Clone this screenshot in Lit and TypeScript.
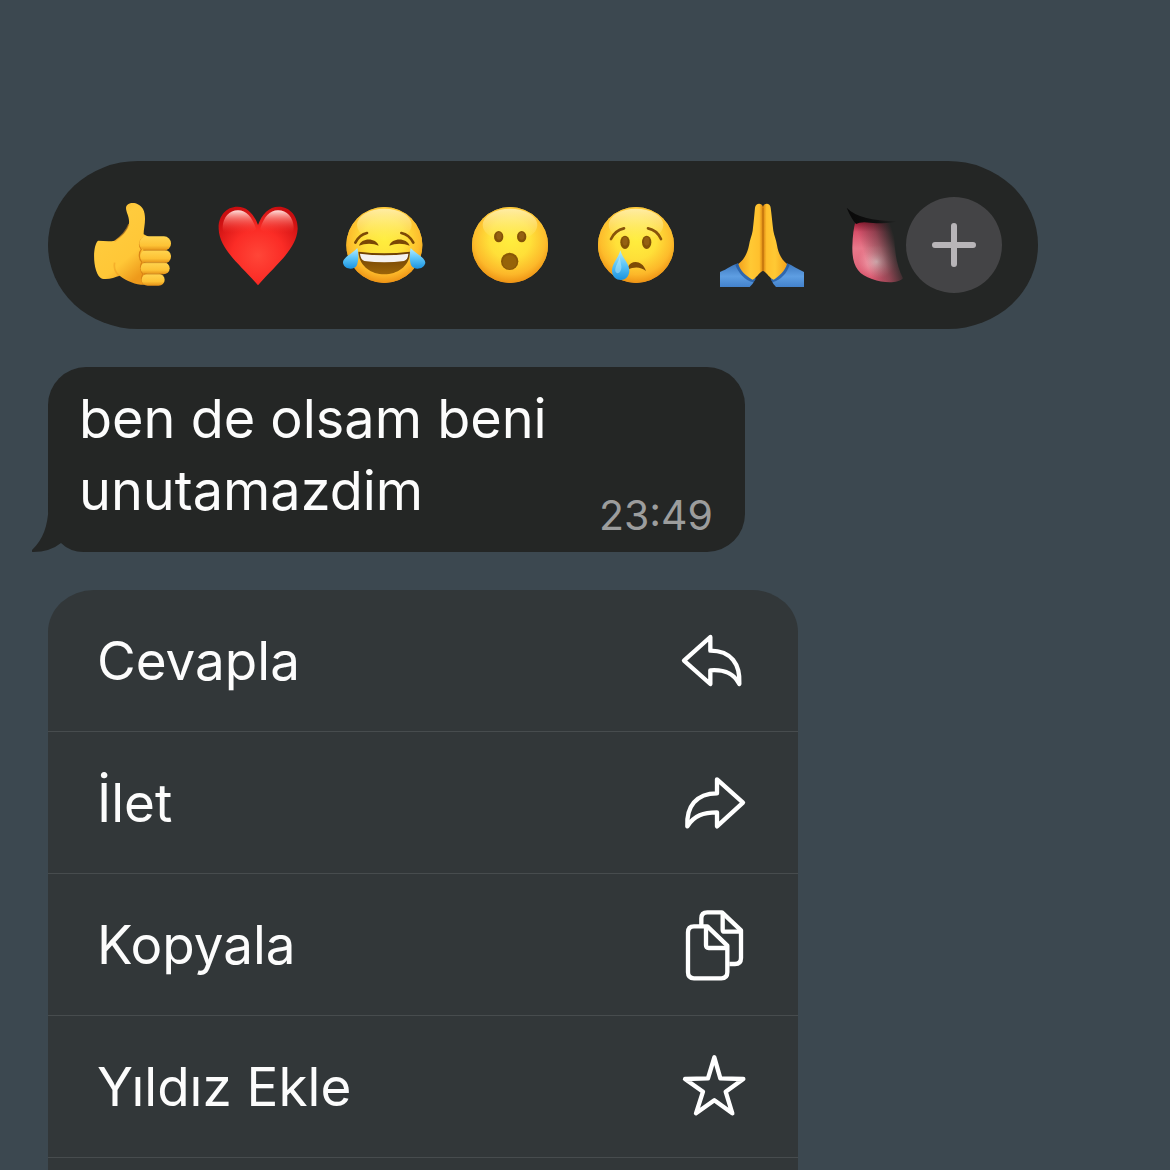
import { LitElement, html, css, svg } from "lit";
import { customElement, property } from "lit/decorators.js";

/* Face gradients shared by the round emoji; each svg gets its own ids. */
const faceDefs = (id: string) => svg`
  <linearGradient id="${id}-base" x1="0" y1="0" x2="0" y2="1">
    <stop offset="0" stop-color="#ffd95a"></stop>
    <stop offset="0.5" stop-color="#ffd62e"></stop>
    <stop offset="1" stop-color="#f6a11c"></stop>
  </linearGradient>
  <radialGradient id="${id}-glow" cx="0.5" cy="0.42" r="0.6">
    <stop offset="0" stop-color="#ffee3e"></stop>
    <stop offset="0.45" stop-color="#ffe23a" stop-opacity="0.9"></stop>
    <stop offset="0.78" stop-color="#fdb92b" stop-opacity="0.85"></stop>
    <stop offset="1" stop-color="#ea8a10"></stop>
  </radialGradient>
  <linearGradient id="${id}-shine" x1="0" y1="0" x2="0" y2="1">
    <stop offset="0" stop-color="#fff3b8" stop-opacity="0.85"></stop>
    <stop offset="1" stop-color="#fff08a" stop-opacity="0"></stop>
  </linearGradient>
  <linearGradient id="${id}-tear" x1="0" y1="0" x2="0" y2="1">
    <stop offset="0" stop-color="#b5ecff"></stop>
    <stop offset="0.5" stop-color="#5cc4f7"></stop>
    <stop offset="1" stop-color="#1b93e0"></stop>
  </linearGradient>`;

const face = (id: string, cx: number) => svg`
  <circle cx="${cx}" cy="165" r="114" fill="url(#${id}-base)"></circle>
  <circle cx="${cx}" cy="165" r="114" fill="url(#${id}-glow)"></circle>
  <ellipse cx="${cx}" cy="105" rx="82" ry="49" fill="url(#${id}-shine)"></ellipse>`;

const emoji = {
  thumb: html`<svg viewBox="30 39 252 252" aria-hidden="true">
    <defs>
      <linearGradient id="th-a" x1="0" y1="0" x2="0.6" y2="1">
        <stop offset="0" stop-color="#f5a623"></stop>
        <stop offset="0.35" stop-color="#ffcb3d"></stop>
        <stop offset="0.75" stop-color="#ffc737"></stop>
        <stop offset="1" stop-color="#ee9a1b"></stop>
      </linearGradient>
      <linearGradient id="th-b" x1="0" y1="0" x2="0" y2="1">
        <stop offset="0" stop-color="#ffd550"></stop>
        <stop offset="0.65" stop-color="#fdc235"></stop>
        <stop offset="1" stop-color="#e38f17"></stop>
      </linearGradient>
    </defs>
    <path fill="url(#th-a)" d="M54 152 C70 153 90 155 104 152 C124 141 144 121 147 100 C149 81 138 67 138 54 C139 36 173 32 189 57 C202 82 190 116 191 133 L214 145 L200 284 C174 287 142 275 119 257 C104 262 85 270 66 266 C39 255 35 170 54 152Z"></path>
    <path fill="none" stroke="#ec9d20" stroke-opacity="0.55" stroke-width="5" d="M104 154 C118 144 137 130 147 103 M117 257 C105 246 101 232 104 218"></path>
    <path fill="none" stroke="#d98416" stroke-width="4" stroke-linejoin="round" d="M193 143 C179 148 174 166 184 178 C175 188 177 209 186 217 C179 226 181 243 189 252 C183 261 184 272 191 282"></path>
    <rect x="178" y="139" width="95" height="43" rx="21" fill="url(#th-b)"></rect>
    <rect x="181" y="180" width="92" height="39" rx="19" fill="url(#th-b)"></rect>
    <rect x="182" y="217" width="87" height="36" rx="18" fill="url(#th-b)"></rect>
    <rect x="185" y="251" width="69" height="36" rx="18" fill="url(#th-b)"></rect>
    <path fill="none" stroke="#b8690f" stroke-opacity="0.6" stroke-width="3" d="M190 181 H260 M190 218 H258 M192 252 H248"></path>
  </svg>`,
  heart: html`<svg viewBox="33 39 252 252" aria-hidden="true">
    <defs>
      <radialGradient id="ht-a" cx="0.5" cy="0.62" r="0.66">
        <stop offset="0" stop-color="#ff4638"></stop>
        <stop offset="0.5" stop-color="#fb2c26"></stop>
        <stop offset="1" stop-color="#c90e10"></stop>
      </radialGradient>
      <linearGradient id="ht-b" x1="0" y1="0" x2="0" y2="1">
        <stop offset="0" stop-color="#ffe0dc"></stop>
        <stop offset="0.3" stop-color="#ff8d85" stop-opacity="0.7"></stop>
        <stop offset="0.8" stop-color="#ff3a30" stop-opacity="0"></stop>
      </linearGradient>
    </defs>
    <path fill="url(#ht-a)" d="M159 105 C147 72 126 50 98 50 C62 50 39 80 41 117 C44 179 104 222 159 286 C214 222 274 179 278 117 C279 80 256 50 221 50 C192 50 171 72 159 105Z"></path>
    <path fill="url(#ht-b)" d="M153 116 C141 80 124 61 99 61 C73 61 54 82 53 112 C53 136 72 150 98 144 C120 139 144 128 153 116Z"></path>
    <path fill="url(#ht-b)" d="M166 116 C177 80 194 61 219 61 C246 61 265 82 266 112 C266 136 246 150 221 144 C198 139 175 128 166 116Z"></path>
  </svg>`,
  joy: html`<svg viewBox="36 39 252 252" aria-hidden="true">
    <defs>
      ${faceDefs("joy")}
      <linearGradient id="joy-m" x1="0" y1="0" x2="0" y2="1">
        <stop offset="0" stop-color="#6b3d02"></stop>
        <stop offset="1" stop-color="#9c6508"></stop>
      </linearGradient>
    </defs>
    ${face("joy", 163)}
    <g fill="none" stroke="#7d4a06" stroke-width="8" stroke-linecap="round">
      <path d="M76 158 Q88 134 111 129"></path>
      <path d="M250 158 Q238 134 214 129"></path>
    </g>
    <path fill="#7a4705" d="M87 167 C93 142 139 142 146 167 C130 159 105 159 87 167Z"></path>
    <path fill="#7a4705" d="M178 167 C185 142 231 142 239 167 C221 159 196 159 178 167Z"></path>
    <path fill="url(#joy-m)" d="M85 185 Q162 195 240 185 C240 226 205 253 163 253 C121 253 87 226 85 185Z"></path>
    <path fill="#f4f1ef" d="M90 191 Q162 201 235 191 Q234 209 222 213 Q163 221 103 213 Q91 208 90 191Z"></path>
    <path fill="url(#joy-tear)" d="M82 174 C86 190 86 212 81 225 C73 242 43 239 39 219 C38 202 66 192 82 174Z"></path>
    <path fill="url(#joy-tear)" d="M242 174 C258 192 286 202 286 219 C281 239 252 242 243 225 C238 212 238 190 242 174Z"></path>
  </svg>`,
  wow: html`<svg viewBox="39 39 252 252" aria-hidden="true">
    <defs>${faceDefs("wow")}</defs>
    ${face("wow", 165)}
    <ellipse cx="131" cy="140" rx="14" ry="17" fill="#835207"></ellipse>
    <ellipse cx="200" cy="140" rx="14" ry="17" fill="#835207"></ellipse>
    <ellipse cx="132" cy="138" rx="8" ry="11" fill="#946012"></ellipse>
    <ellipse cx="200" cy="138" rx="8" ry="11" fill="#946012"></ellipse>
    <circle cx="164" cy="214" r="26" fill="#8a5806"></circle>
    <circle cx="164" cy="216" r="21" fill="#966309"></circle>
  </svg>`,
  cry: html`<svg viewBox="42 39 252 252" aria-hidden="true">
    <defs>${faceDefs("cry")}</defs>
    ${face("cry", 168)}
    <g fill="none" stroke="#88530a" stroke-width="8" stroke-linecap="round">
      <path d="M93 147 Q105 121 132 115"></path>
      <path d="M204 115 Q231 120 243 147"></path>
    </g>
    <ellipse cx="135" cy="157" rx="14" ry="20" fill="#835207"></ellipse>
    <ellipse cx="200" cy="157" rx="14" ry="20" fill="#835207"></ellipse>
    <ellipse cx="135" cy="154" rx="8" ry="13" fill="#946012"></ellipse>
    <ellipse cx="200" cy="154" rx="8" ry="13" fill="#946012"></ellipse>
    <path fill="#7d4a06" d="M144 231 C153 210 187 209 198 243 C182 230 164 229 142 239Z"></path>
    <path fill="url(#cry-tear)" d="M121 181 C127 204 148 220 148 242 C147 279 97 279 96 242 C96 220 115 204 121 181Z"></path>
    <path fill="#d5f4ff" fill-opacity="0.4" d="M119 201 C116 216 104 229 106 244 C112 257 126 246 124 228Z"></path>
  </svg>`,
  pray: html`<svg viewBox="45 39 252 252" aria-hidden="true">
    <defs>
      <linearGradient id="pr-s" x1="0" y1="0" x2="0" y2="1">
        <stop offset="0" stop-color="#3c76bd"></stop>
        <stop offset="0.55" stop-color="#5e9ee2"></stop>
        <stop offset="1" stop-color="#4382cc"></stop>
      </linearGradient>
      <linearGradient id="pr-l" x1="0" y1="0" x2="1" y2="0">
        <stop offset="0" stop-color="#f3a21d"></stop>
        <stop offset="0.5" stop-color="#ffc934"></stop>
        <stop offset="0.85" stop-color="#ffc02d"></stop>
        <stop offset="1" stop-color="#d98210"></stop>
      </linearGradient>
      <linearGradient id="pr-r" x1="1" y1="0" x2="0" y2="0">
        <stop offset="0" stop-color="#f3a21d"></stop>
        <stop offset="0.5" stop-color="#ffc934"></stop>
        <stop offset="0.85" stop-color="#ffc02d"></stop>
        <stop offset="1" stop-color="#d98210"></stop>
      </linearGradient>
    </defs>
    <path fill="url(#pr-s)" d="M45 246 C66 238 84 224 99 220 C110 240 130 260 152 266 Q143 283 134 291 H45Z"></path>
    <path fill="url(#pr-s)" d="M297 246 C279 239 262 226 246 220 C236 240 220 259 197 266 Q204 282 213 291 H297Z"></path>
    <path fill="#20549b" fill-opacity="0.7" d="M99 220 C110 240 130 260 152 266 L146 277 C118 271 100 248 91 224Z"></path>
    <path fill="#20549b" fill-opacity="0.7" d="M246 220 C236 240 220 259 197 266 L202 277 C228 270 246 249 254 224Z"></path>
    <path fill="url(#pr-l)" d="M150 53 C152 38 171 38 174 51 V242 C160 250 154 264 143 269 C122 258 106 242 100 222 C118 208 127 190 132 166 C134 150 141 136 143 122 C146 98 148 74 150 53Z"></path>
    <path fill="url(#pr-r)" d="M197 53 C196 38 176 38 174 51 V242 C188 250 193 264 206 269 C224 258 240 242 246 222 C229 208 220 190 216 166 C214 150 207 136 205 122 C202 98 200 74 197 53Z"></path>
    <path fill="none" stroke="#b86c0b" stroke-width="3" d="M174 53 V243"></path>
  </svg>`,
  tongue: html`<svg viewBox="48 159 252 252" aria-hidden="true">
    <defs>
      <linearGradient id="tg-a" x1="0" y1="0" x2="0" y2="1">
        <stop offset="0" stop-color="#8f1029"></stop>
        <stop offset="0.18" stop-color="#d8506a"></stop>
        <stop offset="0.45" stop-color="#e8798b"></stop>
        <stop offset="1" stop-color="#d9566e"></stop>
      </linearGradient>
      <radialGradient id="tg-b" cx="0.5" cy="0.5" r="0.5">
        <stop offset="0" stop-color="#f9c8cd"></stop>
        <stop offset="1" stop-color="#ee98a5" stop-opacity="0"></stop>
      </radialGradient>
      <linearGradient id="tg-f" gradientUnits="userSpaceOnUse" x1="100" y1="306" x2="198" y2="276">
        <stop offset="0" stop-color="#242625" stop-opacity="0"></stop>
        <stop offset="0.5" stop-color="#242625" stop-opacity="0.4"></stop>
        <stop offset="1" stop-color="#242625"></stop>
      </linearGradient>
      <linearGradient id="tg-c" x1="0" y1="0" x2="1" y2="0">
        <stop offset="0" stop-color="#080808"></stop>
        <stop offset="0.6" stop-color="#101010"></stop>
        <stop offset="1" stop-color="#242625"></stop>
      </linearGradient>
    </defs>
    <path fill="url(#tg-a)" d="M77 212 H195 Q186 320 219 385 C205 400 164 401 126 387 C82 373 66 345 67 290 Q68 242 77 212Z"></path>
    <ellipse cx="140" cy="335" rx="58" ry="50" fill="url(#tg-b)"></ellipse>
    <path fill="url(#tg-f)" d="M60 200 H222 V402 H60Z"></path>
    <path fill="url(#tg-c)" d="M50 173 Q88 213 202 213 Q180 223 120 218 Q92 214 78 222 Q63 205 50 173Z"></path>
  </svg>`,
};

const icons = {
  reply: html`<svg viewBox="54 45 216 216" aria-hidden="true">
    <path d="M151 81 L72 152 L151 222 V181 C192 178 220 188 238 222 C241 163 214 122 151 122Z"></path>
  </svg>`,
  forward: html`<svg viewBox="54 470 216 216" aria-hidden="true">
    <path d="M171 507 L249 577 L171 648 V606 C131 606 102 615 82 648 C79 589 108 549 171 549Z"></path>
  </svg>`,
  copy: html`<svg viewBox="54 56 216 216" aria-hidden="true">
    <path d="M124 105 V84 Q124 66 142 66 H186 L243 120 V203 Q243 221 225 221 H208"></path>
    <path d="M188 69 V118 Q188 124 194 124 H241"></path>
    <path d="M102 108 H142 L202 166 V246 Q202 264 184 264 H102 Q84 264 84 246 V126 Q84 108 102 108Z"></path>
    <path d="M138 110 V165 Q138 173 146 173 H200"></path>
  </svg>`,
  star: html`<svg viewBox="54 482 216 216" aria-hidden="true">
    <path d="M163 501 L181 564 L250 566 L197 604 L217 669 L163 630 L108 669 L129 604 L75 566 L144 564Z"></path>
  </svg>`,
};

@customElement("reaction-bar")
export class ReactionBar extends LitElement {
  static styles = css`
    :host {
      display: flex;
      align-items: center;
      box-sizing: border-box;
      width: 100%;
      max-width: 990px;
      height: 168px;
      padding: 0 36px 0 42px;
      border-radius: 90px / 84px;
      background: #242625;
    }
    .strip {
      display: flex;
      flex: 1;
      min-width: 0;
      gap: 42px;
      overflow: hidden;
    }
    button {
      flex: none;
      margin: 0;
      padding: 0;
      border: 0;
      background: none;
      cursor: pointer;
    }
    .reaction {
      width: 84px;
      height: 84px;
    }
    .reaction svg {
      display: block;
      width: 100%;
      height: 100%;
    }
    .more {
      display: grid;
      place-items: center;
      width: 96px;
      height: 96px;
      border-radius: 50%;
      background: #444446;
    }
    .more svg {
      width: 48px;
      height: 48px;
      fill: none;
      stroke: #b8b5b8;
      stroke-width: 6;
      stroke-linecap: round;
    }
  `;

  private reactions = [
    { label: "Beğen", art: emoji.thumb },
    { label: "Kalp", art: emoji.heart },
    { label: "Gülme", art: emoji.joy },
    { label: "Şaşkın", art: emoji.wow },
    { label: "Üzgün", art: emoji.cry },
    { label: "Teşekkür", art: emoji.pray },
    { label: "Dil", art: emoji.tongue },
  ];

  render() {
    return html`
      <div class="strip">
        ${this.reactions.map(
          (r) => html`<button class="reaction" aria-label=${r.label}>${r.art}</button>`
        )}
      </div>
      <button class="more" aria-label="Daha fazla">
        <svg viewBox="0 0 48 48" aria-hidden="true"><path d="M24 5 V43 M5 24 H43"></path></svg>
      </button>
    `;
  }
}

@customElement("message-bubble")
export class MessageBubble extends LitElement {
  @property() time = "";

  static styles = css`
    :host {
      position: relative;
      display: flex;
      align-items: flex-end;
      box-sizing: border-box;
      width: 100%;
      max-width: 697px;
      padding: 16px 32px 15px 31px;
      border-radius: 38px;
      background: #242625;
      color: #fcfcfc;
    }
    .text {
      flex: 1;
      margin: 0 0 10px;
      font-size: 54px;
      line-height: 72px;
    }
    time {
      color: #9c9d9d;
      font-size: 41px;
      line-height: 44px;
    }
    .tail {
      position: absolute;
      left: -16px;
      bottom: 0;
      width: 60px;
      height: 60px;
      fill: #242625;
    }
    .notch {
      fill: #3c4850;
    }
  `;

  render() {
    return html`
      <svg class="tail" viewBox="0 0 60 60" aria-hidden="true">
        <path class="notch" d="M16 20 V60 H54 Q38 60 29 51Z"></path>
        <path d="M17 0 C17 26 15 44 0 58 Q-1 60 1 60 Q18 60 29 51 Q38 60 52 60 H60 V40 H40 V0Z"></path>
      </svg>
      <p class="text"><slot></slot></p>
      <time>${this.time}</time>
    `;
  }
}

@customElement("context-menu")
export class ContextMenu extends LitElement {
  static styles = css`
    :host {
      display: flex;
      flex: 1;
      flex-direction: column;
      width: 100%;
      max-width: 750px;
      overflow: hidden;
      border-radius: 46px 46px 0 0 / 42px 42px 0 0;
      background: #323739;
    }
    button {
      display: flex;
      align-items: center;
      justify-content: space-between;
      box-sizing: border-box;
      width: 100%;
      height: 142px;
      margin: 0;
      padding: 0 48px 0 49px;
      border: 0;
      border-bottom: 1px solid #474c4e;
      background: none;
      color: #fcfcfc;
      font: inherit;
      font-size: 53px;
      line-height: 72px;
      text-align: left;
      cursor: pointer;
    }
    svg {
      flex: none;
      width: 72px;
      height: 72px;
      fill: none;
      stroke: #fff;
      stroke-width: 13;
      stroke-linecap: butt;
      stroke-linejoin: round;
    }
  `;

  private items = [
    { label: "Cevapla", icon: icons.reply },
    { label: "İlet", icon: icons.forward },
    { label: "Kopyala", icon: icons.copy },
    { label: "Yıldız Ekle", icon: icons.star },
  ];

  render() {
    return this.items.map(
      (item) => html`<button><span>${item.label}</span>${item.icon}</button>`
    );
  }
}

@customElement("app-root")
export class AppRoot extends LitElement {
  static styles = css`
    :host {
      display: flex;
      flex-direction: column;
      box-sizing: border-box;
      height: 100vh;
      padding: 161px 48px 0;
      gap: 38px;
      overflow: hidden;
      background: #3c4850;
      font-family: Inter, "Liberation Sans", sans-serif;
    }
    reaction-bar,
    message-bubble {
      flex: none;
    }
  `;

  render() {
    return html`
      <reaction-bar></reaction-bar>
      <message-bubble time="23:49">ben de olsam beni unutamazdim</message-bubble>
      <context-menu></context-menu>
    `;
  }
}
